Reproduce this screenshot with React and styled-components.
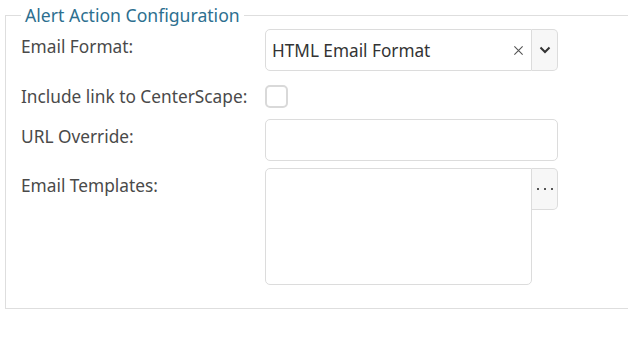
import styled, { createGlobalStyle } from "styled-components";

const GlobalStyle = createGlobalStyle`
  html, body {
    margin: 0;
    padding: 0;
    background: #ffffff;
    overflow: hidden;
  }
  body {
    font-family: "Noto Sans", "Open Sans", sans-serif;
  }
`;

const App = () => {
  return (
    <>
      <GlobalStyle />
      <Page>
        <Fieldset>
          <Legend>Alert Action Configuration</Legend>
          <Row>
            <Label>Email Format:</Label>
            <FieldGroup>
              <SelectBox>
                <SelectValue>HTML Email Format</SelectValue>
                <ClearIcon viewBox="0 0 12 12">
                  <path d="M1.5 1.5 L10.5 10.5 M10.5 1.5 L1.5 10.5" />
                </ClearIcon>
              </SelectBox>
              <SideButton>
                <svg width="12" height="8" viewBox="0 0 12 8">
                  <path d="M1.5 1.5 L6 6 L10.5 1.5" fill="none" stroke="#333" strokeWidth="2" />
                </svg>
              </SideButton>
            </FieldGroup>
          </Row>
          <Row $checkbox>
            <Label $flat>Include link to CenterScape:</Label>
            <Checkbox />
          </Row>
          <Row>
            <Label>URL Override:</Label>
            <TextInput />
          </Row>
          <Row>
            <Label>Email Templates:</Label>
            <FieldGroup $top>
              <TextArea />
              <SideButton>
                <Dots>
                  <span />
                  <span />
                  <span />
                </Dots>
              </SideButton>
            </FieldGroup>
          </Row>
        </Fieldset>
      </Page>
    </>
  );
};

const Page = styled.div`
  padding: 4px 0 0 5px;
  width: 700px;
`;

const Fieldset = styled.fieldset`
  margin: 0;
  width: 660px;
  height: 305px;
  box-sizing: border-box;
  border: 1px solid #dedede;
  padding: 3px 15px 0 15px;
  display: flex;
  flex-direction: column;
  gap: 7px;
`;

const Legend = styled.legend`
  padding: 0 4px;
  margin-left: 0;
  color: #2d6f8f;
  font-size: 17.6px;
  line-height: 22px;
`;

const Row = styled.div`
  display: grid;
  grid-template-columns: 244px 293px;
  align-items: start;
  margin: ${(p) => (p.$checkbox ? "7px 0 4px" : "0")};
`;

const Label = styled.div`
  color: #4a4a4a;
  font-size: 17.3px;
  line-height: ${(p) => (p.$flat ? "23px" : "22px")};
  padding-top: ${(p) => (p.$flat ? "0" : "7px")};
  white-space: nowrap;
`;

const FieldGroup = styled.div`
  display: flex;
  align-items: ${(p) => (p.$top ? "flex-start" : "stretch")};
`;

const SelectBox = styled.div`
  flex: 1;
  height: 42px;
  box-sizing: border-box;
  border: 1px solid #dcdcdc;
  border-radius: 5px 0 0 5px;
  display: flex;
  align-items: center;
  padding: 0 6px 0 6px;
`;

const SelectValue = styled.span`
  flex: 1;
  color: #333;
  font-size: 17.2px;
`;

const ClearIcon = styled.svg`
  width: 11px;
  height: 11px;
  stroke: #555;
  stroke-width: 1.2;
  margin-right: 1px;
`;

const SideButton = styled.div`
  width: 26px;
  height: 42px;
  box-sizing: border-box;
  border: 1px solid #dcdcdc;
  border-left: none;
  border-radius: 0 5px 5px 0;
  background: #f7f7f7;
  display: flex;
  align-items: center;
  justify-content: center;
`;

const Dots = styled.div`
  display: flex;
  gap: 5px;
  span {
    width: 2px;
    height: 2px;
    background: #555;
  }
`;

const Checkbox = styled.div`
  width: 23px;
  height: 23px;
  box-sizing: border-box;
  border: 2px solid #d9d9d9;
  border-radius: 5px;
`;

const TextInput = styled.div`
  height: 42px;
  box-sizing: border-box;
  border: 1px solid #dcdcdc;
  border-radius: 5px;
`;

const TextArea = styled.div`
  flex: 1;
  height: 117px;
  box-sizing: border-box;
  border: 1px solid #dcdcdc;
  border-radius: 5px 0 5px 5px;
`;

export default App;
